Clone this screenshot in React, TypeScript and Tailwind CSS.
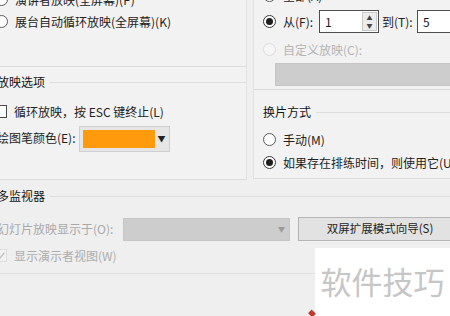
function cx(...a: (string | false | undefined)[]) {
  return a.filter(Boolean).join(' ')
}

function Radio({ checked, disabled }: { checked?: boolean; disabled?: boolean }) {
  return (
    <span
      className={cx(
        'flex h-[13px] w-[13px] shrink-0 items-center justify-center rounded-full border',
        disabled ? 'border-[#dcdcdc] bg-[#f6f6f6]' : checked ? 'border-[#3a3a3a] bg-white' : 'border-[#5a5a5a] bg-white'
      )}
    >
      {checked && <span className="h-[7px] w-[7px] rounded-full bg-[#1e1e1e]" />}
    </span>
  )
}

function Check({ checked, disabled }: { checked?: boolean; disabled?: boolean }) {
  return (
    <span
      className={cx(
        'flex h-[13px] w-[13px] shrink-0 items-center justify-center border',
        disabled ? 'border-[#dedede] bg-[#f2f2f2]' : 'border-[#4a4a4a] bg-white'
      )}
    >
      {checked && (
        <svg viewBox="0 0 12 12" className="h-[11px] w-[11px]">
          <path d="M2 6.5 L5 9.2 L10.2 2.8" fill="none" stroke={disabled ? '#bdbdbd' : '#222'} strokeWidth="1.4" />
        </svg>
      )}
    </span>
  )
}

function GroupLabel({ text, className }: { text: string; className?: string }) {
  return (
    <div className={cx('flex h-[16px] items-center gap-[5px]', className)}>
      <span className="shrink-0 text-[12px] text-[#141414]">{text}</span>
      <span className="h-px flex-1 bg-[#dedede]" />
    </div>
  )
}

function Spin({ value, w }: { value: string; w: string }) {
  return (
    <div className={cx('flex h-[23px] shrink-0 items-center border border-[#4d4d4d] bg-white pl-[5px]', w)}>
      <span className="flex-1 text-[12px] text-[#1a1a1a]">{value}</span>
      <div className="mr-[1px] flex h-[19px] w-[15px] flex-col items-center justify-center border border-[#c9c9c9] bg-[#ececec] text-[6px] leading-[8px] text-[#444]">
        <span>▲</span>
        <span>▼</span>
      </div>
    </div>
  )
}

export default function App() {
  return (
    <div className="relative h-[316px] w-[450px] overflow-hidden bg-[#efefef] font-['Noto_Sans_CJK_SC','Noto_Sans',sans-serif] text-[12px] text-[#222]">
      {/* ── top: two columns ── */}
      <div className="flex h-[180px]">
        {/* left column */}
        <div className="-ml-[6px] flex w-[253px] shrink-0 flex-col border-r border-[#e2e2e2] bg-[#f2f2f2]">
          <div className="flex h-[67px] flex-col border-b border-[#dcdcdc] pl-px">
            <div className="-mt-[10px] flex h-[19px] items-center gap-[7px]">
              <Radio />
              <span>演讲者放映(全屏幕)(P)</span>
            </div>
            <div className="mt-[3px] flex h-[19px] items-center gap-[7px]">
              <Radio />
              <span>展台自动循环放映(全屏幕)(K)</span>
            </div>
          </div>
          <div className="flex flex-1 flex-col border-b border-[#dcdcdc] pl-[3px]">
            <GroupLabel text="放映选项" className="mt-[7px]" />
            <div className="-ml-[3px] mt-[12px] flex h-[19px] items-center gap-[7px]">
              <Check />
              <span>循环放映，按 ESC 键终止(L)</span>
            </div>
            <div className="mt-[5px] flex h-[26px] items-center gap-[3px]">
              <span className="-mt-[3px] shrink-0">绘图笔颜色(E):</span>
              <div className="flex h-[26px] w-[91px] shrink-0 items-center border border-[#cfcfcf] bg-[#e6e6e6] pl-[3px]">
                <span className="h-[18px] w-[72px] bg-[#ff9a0c]" />
                <span className="flex-1 text-center text-[8px] text-[#222]">▼</span>
              </div>
            </div>
          </div>
        </div>

        {/* right column */}
        <div className="ml-[6px] flex w-[210px] shrink-0 flex-col border-l border-[#e2e2e2] bg-[#f2f2f2]">
          <div className="flex h-[90px] flex-col border-b border-[#dcdcdc] pl-[9px]">
            <div className="-mt-[14px] flex h-[19px] items-center gap-[7px]">
              <Radio />
              <span>全部(A)</span>
            </div>
            <div className="mt-[5px] flex h-[23px] items-center">
              <Radio checked />
              <span className="ml-[7px] w-[36px] shrink-0">从(F):</span>
              <Spin value="1" w="w-[60px]" />
              <span className="ml-[3px] w-[35px] shrink-0">到(T):</span>
              <Spin value="5" w="w-[60px]" />
            </div>
            <div className="mt-[7px] flex h-[19px] items-center gap-[7px] text-[#b4b4b4]">
              <Radio disabled />
              <span>自定义放映(C):</span>
            </div>
            <div className="ml-[12px] mt-[4px] h-[23px] w-[190px] shrink-0 border border-[#c6c6c6] bg-[#cdcdcd]" />
          </div>
          <div className="flex h-[89px] flex-col border-b border-[#dcdcdc] pl-[9px]">
            <GroupLabel text="换片方式" className="mt-[14px]" />
            <div className="mt-[10px] flex h-[19px] items-center gap-[7px]">
              <Radio />
              <span>手动(M)</span>
            </div>
            <div className="mt-[4px] flex h-[19px] items-center gap-[7px]">
              <Radio checked />
              <span className="whitespace-nowrap">如果存在排练时间，则使用它(U)</span>
            </div>
          </div>
        </div>
      </div>

      {/* ── multi monitor ── */}
      <div className="-ml-[3px] flex flex-col">
        <GroupLabel text="多监视器" className="mt-[8px]" />
        <div className="mt-[13px] flex h-[24px] items-center">
          <span className="w-[126px] shrink-0 text-[#a9a9a9]">幻灯片放映显示于(O):</span>
          <div className="flex h-[23px] w-[167px] shrink-0 items-center justify-end border border-[#c6c6c6] bg-[#cdcdcd] pr-[4px] text-[7px] text-[#9a9a9a]">
            ▼
          </div>
          <div className="ml-[8px] flex h-[24px] w-[164px] shrink-0 items-center justify-center border border-[#b5b5b5] bg-[#e2e2e2] text-[11.5px] text-[#1e1e1e]">
            双屏扩展模式向导(S)
          </div>
        </div>
        <div className="-ml-[3px] mt-[5px] flex h-[19px] items-center gap-[7px] text-[#adadad]">
          <Check checked disabled />
          <span>显示演示者视图(W)</span>
        </div>
        <div className="mt-[8px] h-px w-[320px] bg-[#e0e0e0]" />
      </div>

      {/* watermark */}
      <div className="absolute left-[315px] top-[248px] flex h-[68px] w-[135px] items-center justify-center bg-white">
        <span className="mt-[-3px] text-[31px] leading-none text-[#c6c6c6]">软件技巧</span>
      </div>
      <span className="absolute left-[309px] top-[311px] h-[5px] w-[6px] rotate-45 bg-[#c0392b]" />
    </div>
  )
}
